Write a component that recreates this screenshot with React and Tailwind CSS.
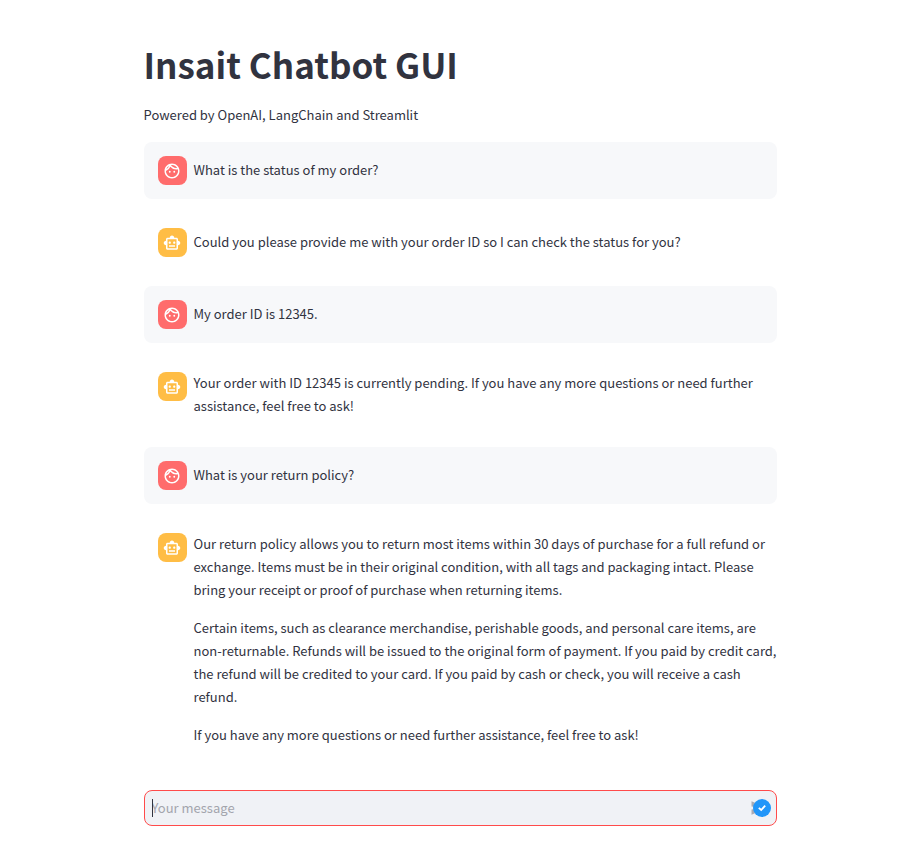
import { MdOutlineFace, MdOutlineSmartToy, MdSend } from "react-icons/md";

const messages = [
  { role: "user", paragraphs: ["What is the status of my order?"] },
  {
    role: "assistant",
    paragraphs: [
      "Could you please provide me with your order ID so I can check the status for you?",
    ],
  },
  { role: "user", paragraphs: ["My order ID is 12345."] },
  {
    role: "assistant",
    paragraphs: [
      "Your order with ID 12345 is currently pending. If you have any more questions or need further assistance, feel free to ask!",
    ],
  },
  { role: "user", paragraphs: ["What is your return policy?"] },
  {
    role: "assistant",
    paragraphs: [
      "Our return policy allows you to return most items within 30 days of purchase for a full refund or exchange. Items must be in their original condition, with all tags and packaging intact. Please bring your receipt or proof of purchase when returning items.",
      "Certain items, such as clearance merchandise, perishable goods, and personal care items, are non-returnable. Refunds will be issued to the original form of payment. If you paid by credit card, the refund will be credited to your card. If you paid by cash or check, you will receive a cash refund.",
      "If you have any more questions or need further assistance, feel free to ask!",
    ],
  },
];

function Avatar({ role }) {
  const isUser = role === "user";
  const Icon = isUser ? MdOutlineFace : MdOutlineSmartToy;
  return (
    <div
      className={`flex size-[29px] shrink-0 items-center justify-center rounded-lg text-white ${
        isUser ? "bg-[#ff6c6c]" : "bg-[#ffbd45]"
      }`}
    >
      <Icon className="size-[18px]" aria-hidden="true" />
    </div>
  );
}

function Message({ role, paragraphs }) {
  return (
    <article
      className={`flex items-start gap-[7px] rounded-lg py-3.5 pl-3.5 ${
        role === "user" ? "bg-[#f7f8fa]" : ""
      }`}
    >
      <Avatar role={role} />
      <div className="-mt-px flex min-h-[30px] min-w-0 flex-1 flex-col justify-center gap-[15px] pb-px">
        {paragraphs.map((text) => (
          <p key={text}>{text}</p>
        ))}
      </div>
    </article>
  );
}

function ChatInput() {
  return (
    <form
      className="relative flex h-9 items-center rounded-lg border border-[#ff4b4b] bg-[#f0f2f6]"
      onSubmit={(event) => event.preventDefault()}
    >
      <input
        type="text"
        aria-label="Your message"
        placeholder="Your message"
        className="h-full min-w-0 flex-1 bg-transparent px-[7px] pb-0.5 caret-[#31333f] outline-none placeholder:text-[#a3a5ad]"
      />
      <span className="pointer-events-none absolute left-[7px] h-[18px] w-px bg-[#31333f]" />
      <button type="submit" aria-label="Send" className="relative mr-[5px] flex h-[18px] w-[21px] items-center">
        <MdSend className="size-[18px] text-[#a9abb5]" aria-hidden="true" />
        <span className="absolute right-0 flex size-[18px] items-center justify-center rounded-full bg-[#2196f9]">
          <svg viewBox="0 0 18 18" className="size-[18px]" aria-hidden="true">
            <path d="M5.8 8.8 8.2 11 12.2 6.6" fill="none" stroke="white" strokeWidth="1.8" />
          </svg>
        </span>
      </button>
    </form>
  );
}

export default function App() {
  return (
    <main className="min-h-screen bg-white px-4 font-['Noto_Sans_CJK_SC',sans-serif] text-[13px] leading-[23px] text-[#31333f]">
      <div className="mx-auto flex max-w-[633px] flex-col pt-10 pb-10">
        <h1 className="text-[35px] leading-[48px] font-bold">Insait Chatbot GUI</h1>
        <p className="mt-[15px]">Powered by OpenAI, LangChain and Streamlit</p>
        <section className="mt-4 flex flex-col gap-[15px]" aria-label="Conversation">
          {messages.map((message, index) => (
            <Message key={index} {...message} />
          ))}
        </section>
        <div className="mt-[29px]">
          <ChatInput />
        </div>
      </div>
    </main>
  );
}
